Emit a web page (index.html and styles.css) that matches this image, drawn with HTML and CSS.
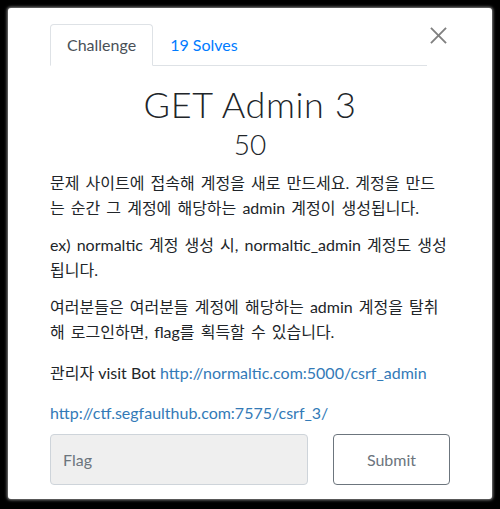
FILE: index.html
```html
<!DOCTYPE html>
<html lang="ko">

<head>
    <meta charset="UTF-8">
    <meta name="viewport" content="width=device-width, initial-scale=1">
    <title>GET Admin 3</title>
    <link rel="stylesheet" href="styles.css">
</head>

<body>
    <div class="modal">
        <div class="modal-head">
            <ul class="tabs">
                <li class="tab active">Challenge</li>
                <li class="tab"><a href="#">19 Solves</a></li>
            </ul>
            <button class="close" aria-label="Close">
                <svg viewBox="0 0 18 18" width="17" height="17">
                    <path d="M1 1L17 17M17 1L1 17" stroke="#808080" stroke-width="2" fill="none" />
                </svg>
            </button>
        </div>

        <h2 class="title">GET Admin 3</h2>
        <h3 class="points">50</h3>

        <div class="description">
            <p>문제 사이트에 접속해 계정을 새로 만드세요. 계정을 만드는 순간 그 계정에 해당하는 admin 계정이 생성됩니다.</p>
            <p>ex) normaltic 계정 생성 시, normaltic_admin 계정도 생성됩니다.</p>
            <p>여러분들은 여러분들 계정에 해당하는 admin 계정을 탈취해 로그인하면, flag를 획득할 수 있습니다.</p>
            <p class="bot">관리자 visit Bot <a href="#">http://normaltic.com:5000/csrf_admin</a></p>
            <p class="url"><a href="#">http://ctf.segfaulthub.com:7575/csrf_3/</a></p>
        </div>

        <form class="submit-row" onsubmit="return false">
            <input type="text" placeholder="Flag">
            <button type="submit">Submit</button>
        </form>
    </div>
</body>

</html>
```

FILE: styles.css
```css
body {
    margin: 0;
    background: #000;
    font-family: 'Lato', 'Noto Sans CJK KR', sans-serif;
    color: #212529;
}

.modal {
    margin: 8px;
    width: 484px;
    height: 491px;
    box-sizing: border-box;
    background: #fff;
    border-radius: 3px;
    box-shadow: 0 0 3px 1px #888;
    padding: 16px 42px 0 42px;
}

.modal-head {
    display: flex;
    align-items: flex-start;
}

.tabs {
    flex: 1;
    display: flex;
    list-style: none;
    margin: 0;
    padding: 0;
    border-bottom: 1px solid #dee2e6;
}

.tab {
    padding: 8px 16px;
    font-size: 16px;
    line-height: 24px;
    margin-bottom: -1px;
    border: 1px solid transparent;
    border-radius: 4px 4px 0 0;
}

.tab.active {
    color: #495057;
    border-color: #dee2e6 #dee2e6 #fff;
}

.tab a {
    color: #007bff;
    text-decoration: none;
}

.close {
    width: 23px;
    padding: 0 3px 0 0;
    margin-top: 3px;
    border: none;
    background: none;
    display: flex;
    justify-content: flex-end;
    cursor: pointer;
}

.title {
    margin: 17px 0 0;
    text-align: center;
    font-size: 36px;
    font-weight: 300;
    line-height: 43px;
    letter-spacing: 0.6px;
}

.points {
    margin: 0;
    text-align: center;
    font-size: 28px;
    font-weight: 300;
    line-height: 36px;
}

.description {
    margin-top: 8px;
    padding-right: 3px;
    font-size: 16px;
    line-height: 25px;
    word-spacing: 2px;
}

.description p {
    margin: 0 0 12px;
}

.description p.bot {
    margin-top: 16px;
    word-spacing: 0;
}

.description p.url {
    margin-top: 15px;
}

.description a {
    color: #337ab7;
    text-decoration: none;
}

.submit-row {
    display: grid;
    grid-template-columns: 258px 117px;
    column-gap: 25px;
    margin-top: -3px;
}

.submit-row input {
    height: 51px;
    box-sizing: border-box;
    background: #efefef;
    border: 1px solid #ced4da;
    border-radius: 4px;
    padding: 0 12px;
    font-family: 'Lato', sans-serif;
    font-size: 16px;
}

.submit-row input::placeholder {
    color: #6c757d;
    opacity: 1;
}

.submit-row button {
    height: 51px;
    background: #fff;
    border: 1px solid #6c757d;
    border-radius: 4px;
    color: #6c757d;
    font-family: 'Lato', sans-serif;
    font-size: 16px;
}
```
